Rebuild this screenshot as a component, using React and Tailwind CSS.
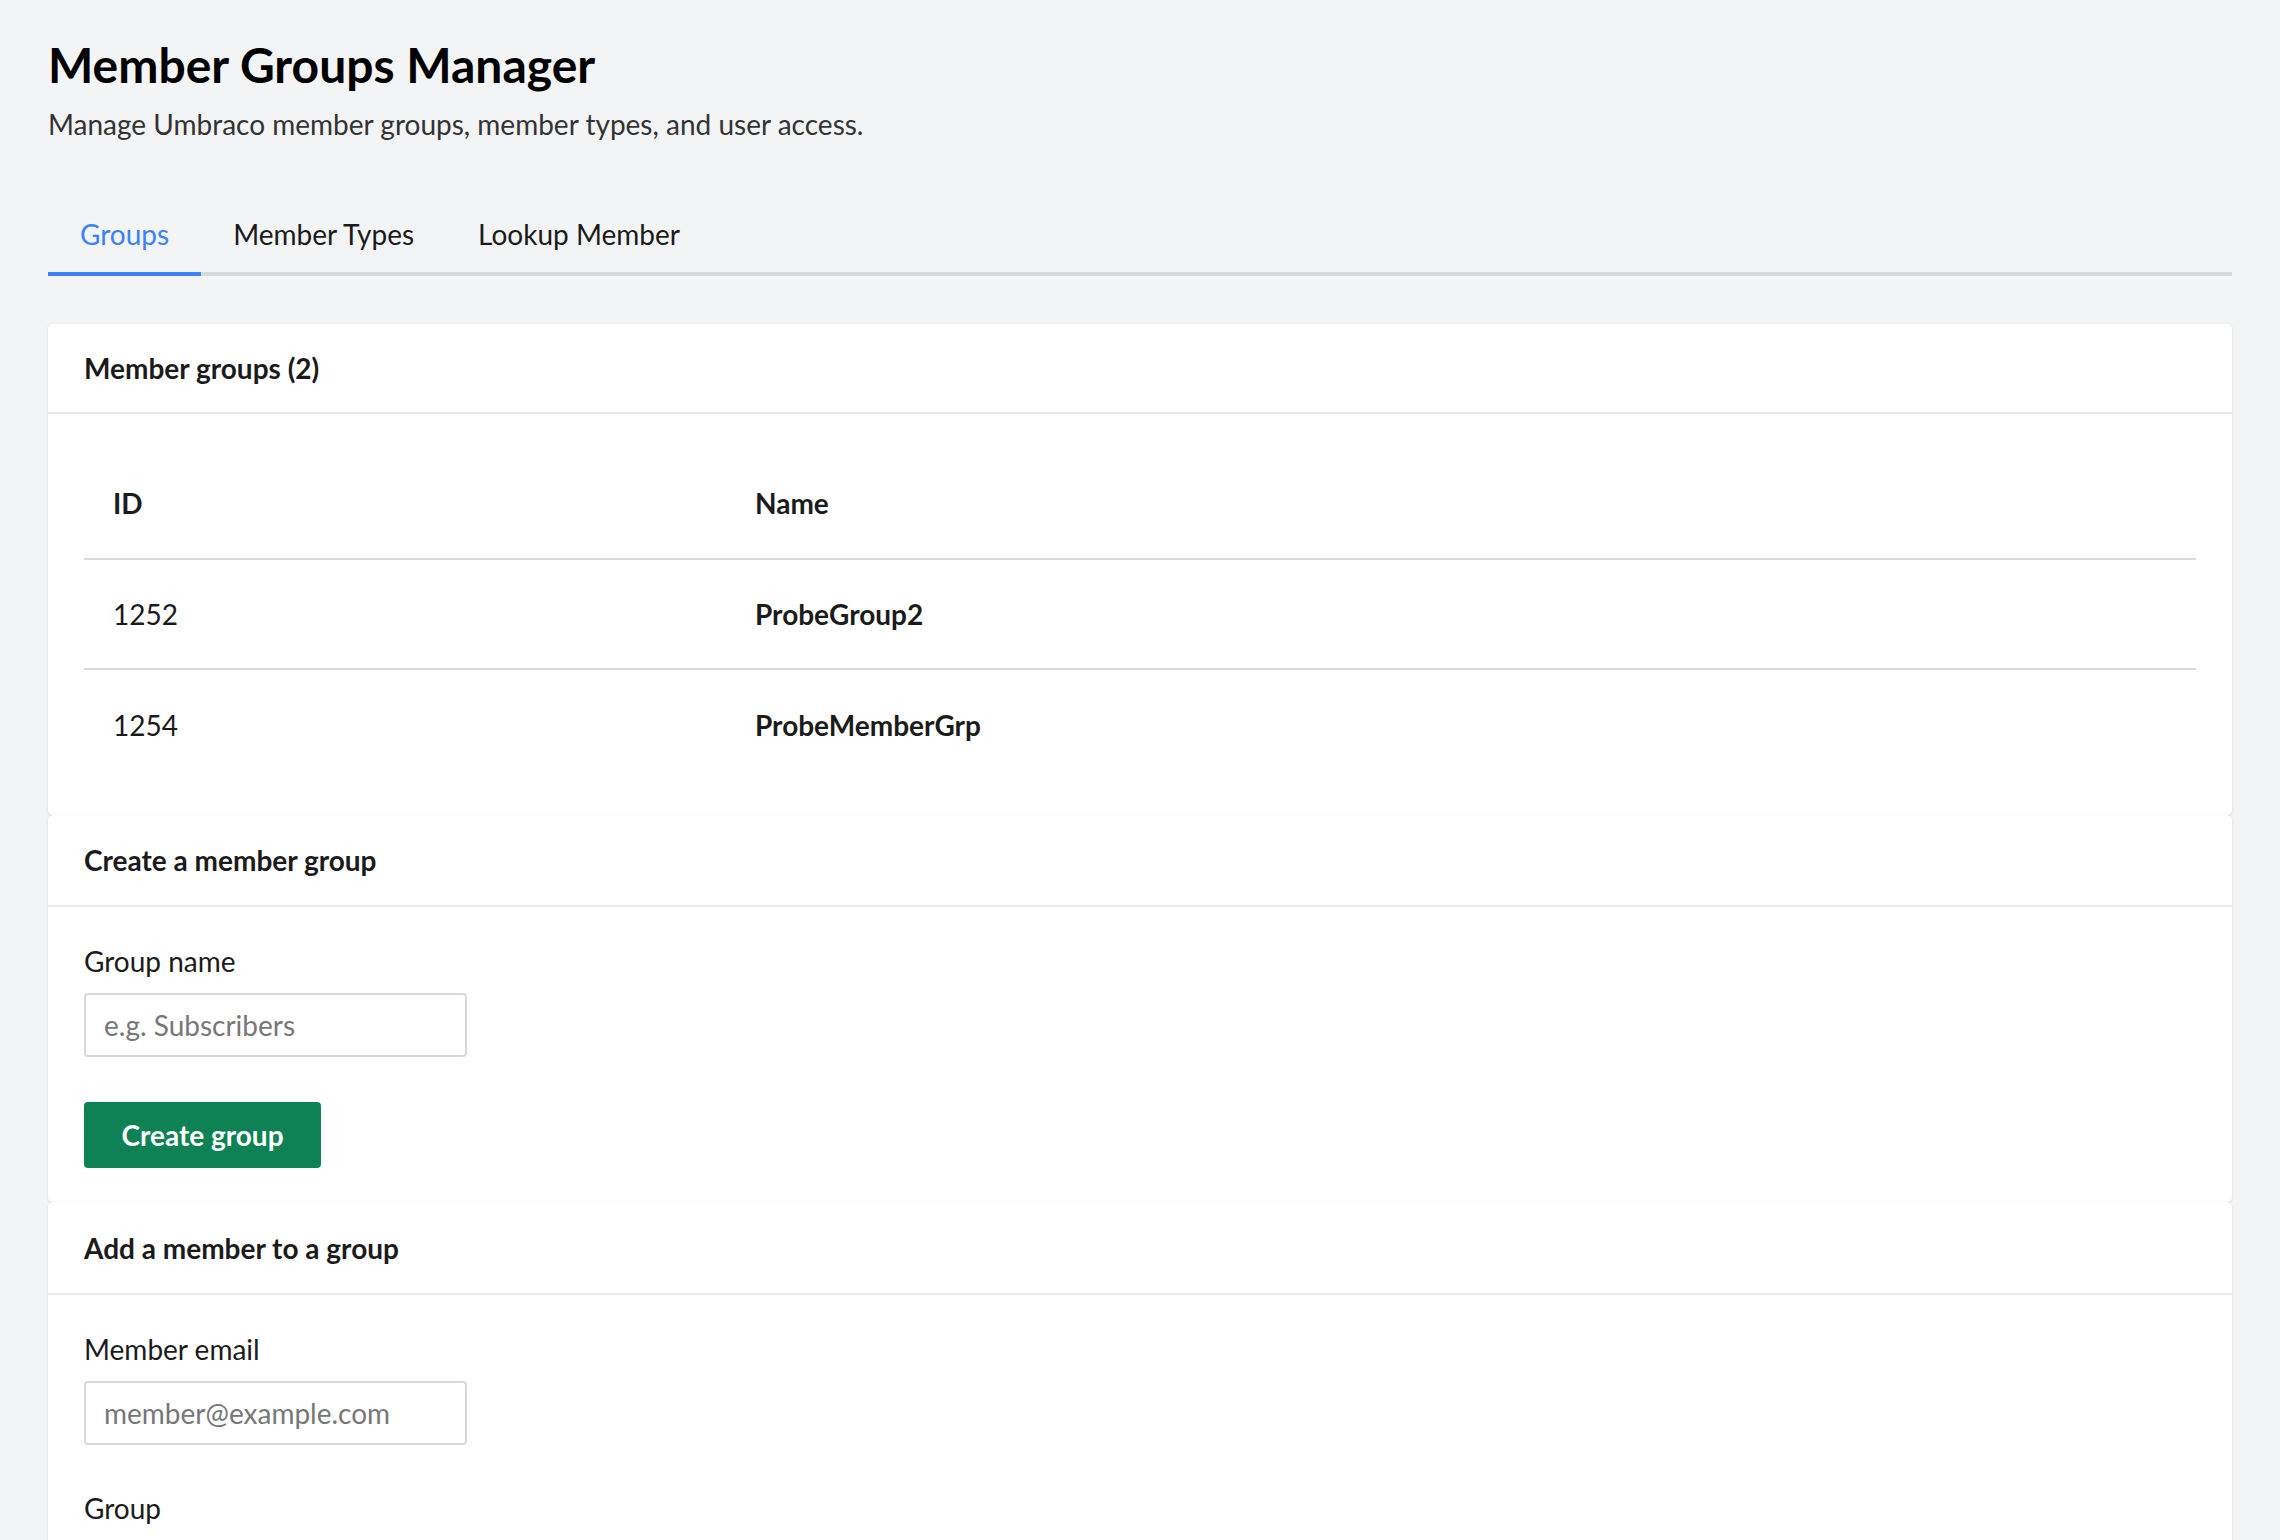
export default function App() {
  const rows = [
    ["1252", "ProbeGroup2"],
    ["1254", "ProbeMemberGrp"],
  ];
  return (
    <div className="min-h-[1540px] bg-[#f3f4f6] px-[48px] pt-[34px] text-[#1b1b1b]" style={{ fontFamily: "Lato, 'Noto Sans', sans-serif" }}>
      <h1 className="text-[48px] font-bold leading-[62px] text-black">Member Groups Manager</h1>
      <p className="mt-[10px] text-[28px] leading-[36px] text-[#333]">Manage Umbraco member groups, member types, and user access.</p>
      <div className="mt-[74px] flex border-b-[4px] border-[#d9d9dc]">
        <div className="-mb-[4px] border-b-[4px] border-[#3b82f6] px-[32px] pb-[20px] text-[28px] leading-[36px] text-[#3b82f6]">Groups</div>
        <div className="px-[32px] pb-[20px] text-[28px] leading-[36px]">Member Types</div>
        <div className="px-[32px] pb-[20px] text-[28px] leading-[36px]">Lookup Member</div>
      </div>
      <div className="mt-[48px] flex flex-col">
        <section className="rounded-[5px] bg-white shadow-[0_1px_3px_rgba(0,0,0,0.12)]">
          <div className="flex h-[90px] items-center border-b-2 border-[#e9e9eb] px-[36px] text-[28px] font-bold">Member groups (2)</div>
          <div className="px-[36px] pt-[34px] pb-[36px]">
            <table className="w-full table-fixed border-collapse text-[28px]">
              <colgroup>
                <col className="w-[642px]" />
                <col />
              </colgroup>
              <thead>
                <tr className="h-[111px] border-b-2 border-[#d9d9dc]">
                  <th className="px-[29px] text-left font-bold">ID</th>
                  <th className="px-[29px] text-left font-bold">Name</th>
                </tr>
              </thead>
              <tbody>
                {rows.map((r, i) => (
                  <tr key={r[0]} className={i === 0 ? "h-[110px] border-b-2 border-[#d9d9dc]" : "h-[110px]"}>
                    <td className="px-[29px]">{r[0]}</td>
                    <td className="px-[29px] font-bold">{r[1]}</td>
                  </tr>
                ))}
              </tbody>
            </table>
          </div>
        </section>
        <section className="rounded-[5px] bg-white shadow-[0_1px_3px_rgba(0,0,0,0.12)]">
          <div className="flex h-[92px] items-center border-b-2 border-[#e9e9eb] px-[36px] text-[28px] font-bold">Create a member group</div>
          <div className="px-[36px] pt-[36px] pb-[34px]">
            <div className="text-[28px] leading-[36px]">Group name</div>
            <input placeholder="e.g. Subscribers" className="mt-[14px] block h-[64px] w-[383px] rounded-[4px] border-2 border-[#d9d9dc] px-[18px] text-[28px] placeholder:text-[#777] outline-none" />
            <button className="mt-[45px] h-[66px] w-[237px] rounded-[4px] bg-[#0e8254] text-[28px] font-bold text-white">Create group</button>
          </div>
        </section>
        <section className="rounded-[5px] bg-white shadow-[0_1px_3px_rgba(0,0,0,0.12)]">
          <div className="flex h-[93px] items-center border-b-2 border-[#e9e9eb] px-[36px] text-[28px] font-bold">Add a member to a group</div>
          <div className="px-[36px] pt-[36px] pb-[34px]">
            <div className="text-[28px] leading-[36px]">Member email</div>
            <input placeholder="member@example.com" className="mt-[14px] block h-[64px] w-[383px] rounded-[4px] border-2 border-[#d9d9dc] px-[18px] text-[28px] placeholder:text-[#777] outline-none" />
            <div className="mt-[45px] text-[28px] leading-[36px]">Group</div>
            <div className="h-[200px]"></div>
          </div>
        </section>
      </div>
    </div>
  );
}
